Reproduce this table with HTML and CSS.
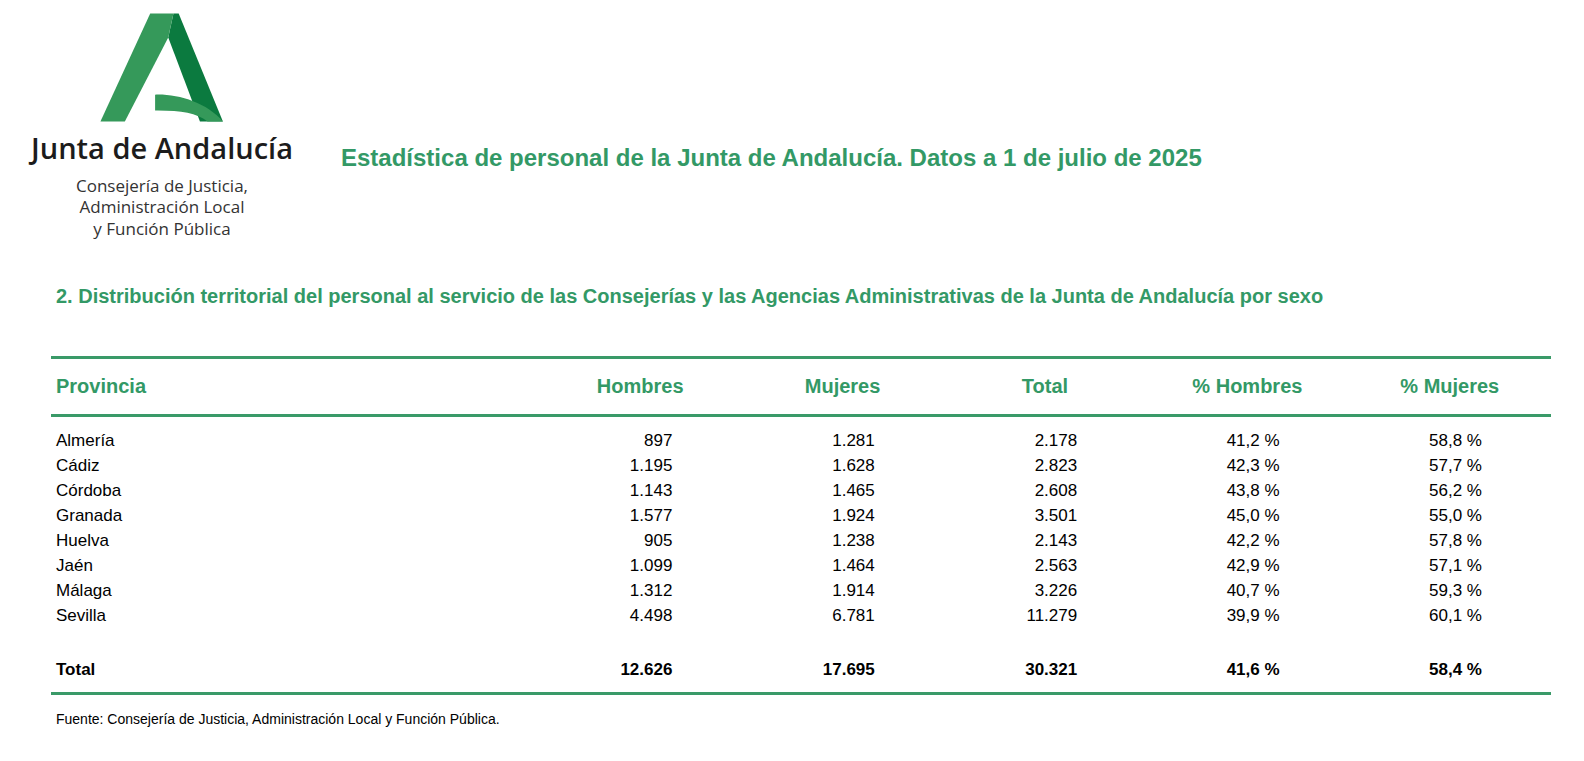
FILE: index.html
```html
<!DOCTYPE html>
<html lang="es">
<head>
<meta charset="utf-8">
<title>Estadística de personal de la Junta de Andalucía</title>
<link rel="stylesheet" href="styles.css">
</head>
<body>
<div class="page">
  <header class="top">
    <div class="logo">
      <svg class="logo-mark" viewBox="100 10 125 112" preserveAspectRatio="none" aria-hidden="true">
        <polygon points="168.3,36.7 173.3,13.3 178.3,13.3 220.7,118.3 198.7,118.3" fill="#0b7a3f"/>
        <polygon points="103.3,118.3 126.7,118.3 168.3,36.7 173.3,13.3 151,13.3" fill="#35995a"/>
        <path d="M155.7,92.3 C178,91.5 205,100 220.7,118.3 L206,118.3 C195,110 180,107.5 155.7,107.7 Z" fill="#35995a"/>
      </svg>
      <div class="logo-name">Junta de Andalucía</div>
      <div class="logo-sub">Consejería de Justicia,<br>Administración Local<br>y Función Pública</div>
    </div>
    <h1 class="title">Estadística de personal de la Junta de Andalucía. Datos a 1 de julio de 2025</h1>
  </header>

  <h2 class="heading">2. Distribución territorial del personal al servicio de las Consejerías y las Agencias Administrativas de la Junta de Andalucía por sexo</h2>

  <table class="data">
    <colgroup>
      <col class="c-prov">
      <col class="c-num"><col class="c-num"><col class="c-num"><col class="c-num"><col class="c-num">
    </colgroup>
    <thead>
      <tr>
        <th class="prov">Provincia</th>
        <th>Hombres</th>
        <th>Mujeres</th>
        <th>Total</th>
        <th>% Hombres</th>
        <th>% Mujeres</th>
      </tr>
    </thead>
    <tbody>
      <tr class="first"><td class="prov">Almería</td><td>897</td><td>1.281</td><td>2.178</td><td>41,2 %</td><td>58,8 %</td></tr>
      <tr><td class="prov">Cádiz</td><td>1.195</td><td>1.628</td><td>2.823</td><td>42,3 %</td><td>57,7 %</td></tr>
      <tr><td class="prov">Córdoba</td><td>1.143</td><td>1.465</td><td>2.608</td><td>43,8 %</td><td>56,2 %</td></tr>
      <tr><td class="prov">Granada</td><td>1.577</td><td>1.924</td><td>3.501</td><td>45,0 %</td><td>55,0 %</td></tr>
      <tr><td class="prov">Huelva</td><td>905</td><td>1.238</td><td>2.143</td><td>42,2 %</td><td>57,8 %</td></tr>
      <tr><td class="prov">Jaén</td><td>1.099</td><td>1.464</td><td>2.563</td><td>42,9 %</td><td>57,1 %</td></tr>
      <tr><td class="prov">Málaga</td><td>1.312</td><td>1.914</td><td>3.226</td><td>40,7 %</td><td>59,3 %</td></tr>
      <tr><td class="prov">Sevilla</td><td>4.498</td><td>6.781</td><td>11.279</td><td>39,9 %</td><td>60,1 %</td></tr>
      <tr class="total"><td class="prov">Total</td><td>12.626</td><td>17.695</td><td>30.321</td><td>41,6 %</td><td>58,4 %</td></tr>
    </tbody>
  </table>

  <p class="source">Fuente: Consejería de Justicia, Administración Local y Función Pública.</p>
</div>
</body>
</html>
```

FILE: styles.css
```css
html, body {
  margin: 0;
  padding: 0;
  background: #ffffff;
}

body {
  font-family: "Liberation Sans", Arial, sans-serif;
  color: #000000;
}

.page {
  padding-top: 9.6px;
}

.top {
  display: flex;
  align-items: flex-start;
}

.logo {
  width: 262px;
  margin-left: 31px;
  display: flex;
  flex-direction: column;
  align-items: center;
}

.logo-mark {
  display: block;
  width: 130.4px;
  height: 115.2px;
}

.logo-name {
  margin-top: 6.4px;
  font-family: "Open Sans", "Noto Sans", sans-serif;
  font-weight: 600;
  font-size: 29px;
  line-height: 34px;
  color: #1c1c1c;
  white-space: nowrap;
}

.logo-sub {
  margin-top: 9.4px;
  font-family: "Open Sans", "Noto Sans", sans-serif;
  font-size: 17px;
  line-height: 21.5px;
  color: #333333;
  text-align: center;
  white-space: nowrap;
}

.title {
  margin: 134.6px 0 0 48px;
  font-size: 24px;
  line-height: 28px;
  font-weight: bold;
  color: #339966;
  white-space: nowrap;
}

.heading {
  margin: 45.35px 0 0 56px;
  font-size: 20px;
  line-height: 24px;
  font-weight: bold;
  color: #339966;
  white-space: nowrap;
}

.data {
  margin: 48px 0 0 51px;
  width: 1500px;
  table-layout: fixed;
  border-collapse: separate;
  border-spacing: 0;
}

.c-prov { width: 488px; }
.c-num { width: 202.4px; }

.data th {
  border-top: 3px solid #3a9a68;
  border-bottom: 3px solid #3a9a68;
  padding: 15px 0 16px 0;
  font-size: 20px;
  line-height: 24px;
  font-weight: bold;
  color: #339966;
  text-align: center;
}

.data th.prov {
  text-align: left;
  padding-left: 5px;
}

.data td {
  padding: 0 69px 0 0;
  font-size: 17px;
  line-height: 25px;
  text-align: right;
  white-space: nowrap;
}

.data td.prov {
  padding: 0 0 0 5px;
  text-align: left;
}

.data tr.first td {
  padding-top: 11px;
}

.data tr.total td {
  padding-top: 29px;
  padding-bottom: 10px;
  font-weight: bold;
  border-bottom: 3px solid #3a9a68;
}

.source {
  margin: 15px 0 0 56px;
  font-size: 14px;
  line-height: 18px;
}
```
